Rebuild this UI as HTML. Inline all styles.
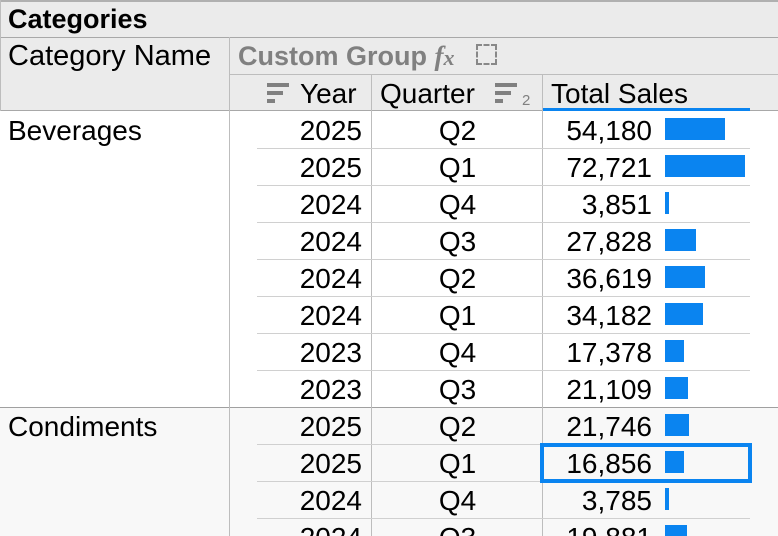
<!DOCTYPE html>
<html style="height:536px;overflow:hidden"><head><style>
html,body{margin:0;width:778px;height:536px;overflow:hidden}
body{background:#fff;font-family:"Liberation Sans",sans-serif;color:#000;position:relative}
div{position:absolute;box-sizing:border-box}
.t{font-size:28px;line-height:37px;white-space:nowrap}
.hl{background:#bdbdbd}
.bar{background:#0a84f0;height:22px}
</style></head><body>
<div style="left:0;top:0;width:778px;height:111px;background:#ebebeb"></div>
<div style="left:0;top:0;width:778px;height:2px;background:#b0b0b0"></div>
<div style="left:0;top:37px;width:778px;height:1px;background:#a8a8a8"></div>
<div class="hl" style="left:230px;top:74px;width:548px;height:1px"></div>
<div style="left:0;top:110px;width:778px;height:1px;background:#a8a8a8"></div>
<div class="hl" style="left:0;top:0;width:1px;height:111px"></div>
<div class="hl" style="left:229px;top:37px;width:1px;height:499px"></div>
<div class="hl" style="left:371px;top:74px;width:1px;height:462px"></div>
<div class="hl" style="left:542px;top:74px;width:1px;height:462px"></div>
<div style="left:543px;top:108px;width:207px;height:3px;background:#0a84f0"></div>

<div class="t" style="left:8px;top:1px;font-weight:bold;font-size:27px">Categories</div>
<div class="t" style="left:8px;top:38px;font-size:29px">Category Name</div>
<div class="t" style="left:238px;top:38px;color:#808080;font-weight:bold;font-size:27px">Custom Group <span style="font-family:'Liberation Serif',serif;font-style:italic">f<span style="font-size:22px">x</span></span></div>
<div style="left:476px;top:44px;width:21px;height:21px;border:2px dashed #888"></div>
<div style="left:267px;top:83px;width:22px;height:4px;background:#808080"></div>
<div style="left:267px;top:91px;width:16px;height:4px;background:#808080"></div>
<div style="left:267px;top:99px;width:8px;height:4px;background:#808080"></div>
<div class="t" style="left:300px;top:75px">Year</div>
<div class="t" style="left:380px;top:75px">Quarter</div>
<div style="left:495px;top:83px;width:22px;height:4px;background:#808080"></div>
<div style="left:495px;top:91px;width:16px;height:4px;background:#808080"></div>
<div style="left:495px;top:99px;width:8px;height:4px;background:#808080"></div>
<div style="left:522px;top:92px;font-size:15px;color:#808080">2</div>
<div class="t" style="left:551px;top:75px">Total Sales</div>

<div style="left:0;top:407px;width:778px;height:129px;background:#f8f8f8"></div>
<div style="left:0;top:407px;width:778px;height:1px;background:#a0a0a0"></div>
<div class="hl" style="left:229px;top:407px;width:1px;height:129px"></div>
<div class="hl" style="left:371px;top:407px;width:1px;height:129px"></div>
<div class="hl" style="left:542px;top:407px;width:1px;height:129px"></div>

<div class="t" style="left:8px;top:112px">Beverages</div>
<div class="t" style="left:8px;top:408px">Condiments</div>

<div style="left:257px;top:148px;width:493px;height:1px;background:#d0d0d0"></div>
<div style="left:257px;top:185px;width:493px;height:1px;background:#d0d0d0"></div>
<div style="left:257px;top:222px;width:493px;height:1px;background:#d0d0d0"></div>
<div style="left:257px;top:259px;width:493px;height:1px;background:#d0d0d0"></div>
<div style="left:257px;top:296px;width:493px;height:1px;background:#d0d0d0"></div>
<div style="left:257px;top:333px;width:493px;height:1px;background:#d0d0d0"></div>
<div style="left:257px;top:370px;width:493px;height:1px;background:#d0d0d0"></div>
<div style="left:257px;top:444px;width:493px;height:1px;background:#d0d0d0"></div>
<div style="left:257px;top:481px;width:493px;height:1px;background:#d0d0d0"></div>
<div style="left:257px;top:518px;width:493px;height:1px;background:#d0d0d0"></div>

<div class="t" style="right:416px;top:112px">2025</div><div class="t" style="left:372px;width:171px;text-align:center;top:112px">Q2</div><div class="t" style="right:126px;top:112px">54,180</div><div class="bar" style="left:665px;top:118px;width:60px"></div>
<div class="t" style="right:416px;top:149px">2025</div><div class="t" style="left:372px;width:171px;text-align:center;top:149px">Q1</div><div class="t" style="right:126px;top:149px">72,721</div><div class="bar" style="left:665px;top:155px;width:80px"></div>
<div class="t" style="right:416px;top:186px">2024</div><div class="t" style="left:372px;width:171px;text-align:center;top:186px">Q4</div><div class="t" style="right:126px;top:186px">3,851</div><div class="bar" style="left:665px;top:192px;width:4px"></div>
<div class="t" style="right:416px;top:223px">2024</div><div class="t" style="left:372px;width:171px;text-align:center;top:223px">Q3</div><div class="t" style="right:126px;top:223px">27,828</div><div class="bar" style="left:665px;top:229px;width:31px"></div>
<div class="t" style="right:416px;top:260px">2024</div><div class="t" style="left:372px;width:171px;text-align:center;top:260px">Q2</div><div class="t" style="right:126px;top:260px">36,619</div><div class="bar" style="left:665px;top:266px;width:40px"></div>
<div class="t" style="right:416px;top:297px">2024</div><div class="t" style="left:372px;width:171px;text-align:center;top:297px">Q1</div><div class="t" style="right:126px;top:297px">34,182</div><div class="bar" style="left:665px;top:303px;width:38px"></div>
<div class="t" style="right:416px;top:334px">2023</div><div class="t" style="left:372px;width:171px;text-align:center;top:334px">Q4</div><div class="t" style="right:126px;top:334px">17,378</div><div class="bar" style="left:665px;top:340px;width:19px"></div>
<div class="t" style="right:416px;top:371px">2023</div><div class="t" style="left:372px;width:171px;text-align:center;top:371px">Q3</div><div class="t" style="right:126px;top:371px">21,109</div><div class="bar" style="left:665px;top:377px;width:23px"></div>
<div class="t" style="right:416px;top:408px">2025</div><div class="t" style="left:372px;width:171px;text-align:center;top:408px">Q2</div><div class="t" style="right:126px;top:408px">21,746</div><div class="bar" style="left:665px;top:414px;width:24px"></div>
<div class="t" style="right:416px;top:445px">2025</div><div class="t" style="left:372px;width:171px;text-align:center;top:445px">Q1</div><div class="t" style="right:126px;top:445px">16,856</div><div class="bar" style="left:665px;top:451px;width:19px"></div>
<div class="t" style="right:416px;top:482px">2024</div><div class="t" style="left:372px;width:171px;text-align:center;top:482px">Q4</div><div class="t" style="right:126px;top:482px">3,785</div><div class="bar" style="left:665px;top:488px;width:4px"></div>
<div style="left:0;top:519px;width:778px;height:17px;overflow:hidden">
<div class="t" style="right:416px;top:0">2024</div><div class="t" style="left:372px;width:171px;text-align:center;top:0">Q3</div><div class="t" style="right:126px;top:0">19,881</div><div class="bar" style="left:665px;top:6px;width:22px"></div>
</div>

<div style="left:540px;top:443px;width:212px;height:40px;border:4px solid #0a84f0"></div>
</body></html>
